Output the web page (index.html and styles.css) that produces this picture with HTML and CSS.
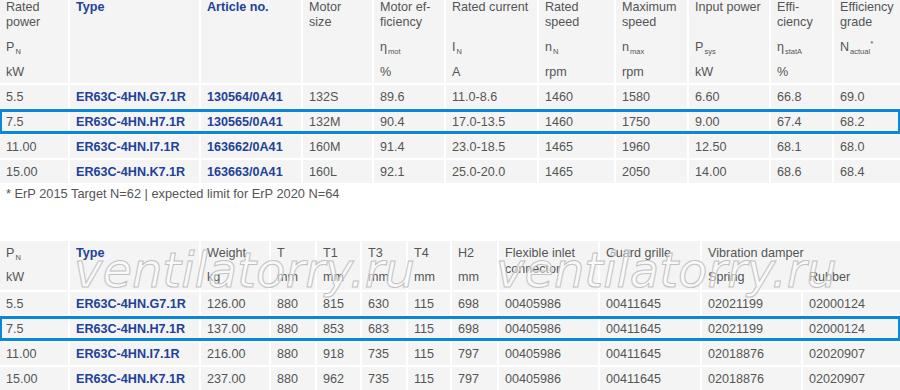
FILE: index.html
```html
<!DOCTYPE html>
<html lang="en">
<head>
<meta charset="utf-8">
<title>ER63C-4HN data</title>
<link rel="stylesheet" href="styles.css">
</head>
<body>
<div class="tbl t1">
  <div class="row head1">
    <div class="c"><div class="nm">Rated<br>power</div><div class="sy">P<span class="s">N</span></div><div class="un">kW</div></div>
    <div class="c b"><div class="nm">Type</div></div>
    <div class="c b"><div class="nm">Article no.</div></div>
    <div class="c"><div class="nm">Motor<br>size</div></div>
    <div class="c"><div class="nm">Motor ef-<br>ficiency</div><div class="sy">η<span class="s">mot</span></div><div class="un">%</div></div>
    <div class="c"><div class="nm">Rated current</div><div class="sy">I<span class="s">N</span></div><div class="un">A</div></div>
    <div class="c"><div class="nm">Rated<br>speed</div><div class="sy">n<span class="s">N</span></div><div class="un">rpm</div></div>
    <div class="c"><div class="nm">Maximum<br>speed</div><div class="sy">n<span class="s">max</span></div><div class="un">rpm</div></div>
    <div class="c"><div class="nm">Input power</div><div class="sy">P<span class="s">sys</span></div><div class="un">kW</div></div>
    <div class="c"><div class="nm">Effi-<br>ciency</div><div class="sy">η<span class="s">statA</span></div><div class="un">%</div></div>
    <div class="c"><div class="nm">Efficiency<br>grade</div><div class="sy">N<span class="s">actual</span><span class="sup">*</span></div></div>
  </div>
  <div class="row">
    <div class="c">5.5</div><div class="c b">ER63C-4HN.G7.1R</div><div class="c b">130564/0A41</div><div class="c">132S</div><div class="c">89.6</div><div class="c">11.0-8.6</div><div class="c">1460</div><div class="c">1580</div><div class="c">6.60</div><div class="c">66.8</div><div class="c">69.0</div>
  </div>
  <div class="row hl">
    <div class="c">7.5</div><div class="c b">ER63C-4HN.H7.1R</div><div class="c b">130565/0A41</div><div class="c">132M</div><div class="c">90.4</div><div class="c">17.0-13.5</div><div class="c">1460</div><div class="c">1750</div><div class="c">9.00</div><div class="c">67.4</div><div class="c">68.2</div>
  </div>
  <div class="row">
    <div class="c">11.00</div><div class="c b">ER63C-4HN.I7.1R</div><div class="c b">163662/0A41</div><div class="c">160M</div><div class="c">91.4</div><div class="c">23.0-18.5</div><div class="c">1465</div><div class="c">1960</div><div class="c">12.50</div><div class="c">68.1</div><div class="c">68.0</div>
  </div>
  <div class="row">
    <div class="c">15.00</div><div class="c b">ER63C-4HN.K7.1R</div><div class="c b">163663/0A41</div><div class="c">160L</div><div class="c">92.1</div><div class="c">25.0-20.0</div><div class="c">1465</div><div class="c">2050</div><div class="c">14.00</div><div class="c">68.6</div><div class="c">68.4</div>
  </div>
</div>
<p class="note">* ErP 2015 Target N=62 | expected limit for ErP 2020 N=64</p>
<div class="tbl t2">
  <div class="row head2">
    <div class="c"><div class="n2">P<span class="s">N</span></div><div class="u2">kW</div></div>
    <div class="c"><div class="n2 b">Type</div></div>
    <div class="c"><div class="n2">Weight</div><div class="u2">kg</div></div>
    <div class="c"><div class="n2">T</div><div class="u2">mm</div></div>
    <div class="c"><div class="n2">T1</div><div class="u2">mm</div></div>
    <div class="c"><div class="n2">T3</div><div class="u2">mm</div></div>
    <div class="c"><div class="n2">T4</div><div class="u2">mm</div></div>
    <div class="c"><div class="n2">H2</div><div class="u2">mm</div></div>
    <div class="c"><div class="n2">Flexible inlet<br>connector</div></div>
    <div class="c"><div class="n2">Guard grille</div></div>
    <div class="c span2"><div class="n2">Vibration damper</div><div class="u2 vd"><span class="vd1">Spring</span><span>Rubber</span></div></div>
  </div>
  <div class="row">
    <div class="c">5.5</div><div class="c b">ER63C-4HN.G7.1R</div><div class="c">126.00</div><div class="c">880</div><div class="c">815</div><div class="c">630</div><div class="c">115</div><div class="c">698</div><div class="c">00405986</div><div class="c">00411645</div><div class="c">02021199</div><div class="c">02000124</div>
  </div>
  <div class="row hl">
    <div class="c">7.5</div><div class="c b">ER63C-4HN.H7.1R</div><div class="c">137.00</div><div class="c">880</div><div class="c">853</div><div class="c">683</div><div class="c">115</div><div class="c">698</div><div class="c">00405986</div><div class="c">00411645</div><div class="c">02021199</div><div class="c">02000124</div>
  </div>
  <div class="row">
    <div class="c">11.00</div><div class="c b">ER63C-4HN.I7.1R</div><div class="c">216.00</div><div class="c">880</div><div class="c">918</div><div class="c">735</div><div class="c">115</div><div class="c">797</div><div class="c">00405986</div><div class="c">00411645</div><div class="c">02018876</div><div class="c">02020907</div>
  </div>
  <div class="row">
    <div class="c">15.00</div><div class="c b">ER63C-4HN.K7.1R</div><div class="c">237.00</div><div class="c">880</div><div class="c">962</div><div class="c">735</div><div class="c">115</div><div class="c">797</div><div class="c">00405986</div><div class="c">00411645</div><div class="c">02018876</div><div class="c">02020907</div>
  </div>
  <div class="wm wm1" aria-hidden="true">ventilatorry.ru</div>
  <div class="wm wm2" aria-hidden="true">ventilatorry.ru</div>
</div>
</body>
</html>
```
FILE: styles.css
```css
body {
  margin: 0;
  background: #fff;
  font-family: "Liberation Sans", Arial, Helvetica, sans-serif;
  font-size: 12.6px;
  color: #555;
}
.tbl {
  display: grid;
  row-gap: 2px;
}
.row {
  display: grid;
  column-gap: 2px;
}
.t1 .row {
  grid-template-columns: 68px 129px 100px 69px 70px 91px 75px 71px 80px 61px 66px;
}
.t2 .row {
  grid-template-columns: 68px 129px 68px 44px 43px 44px 42px 45px 99px 100px 99px 97px;
}
.c {
  background: #f4f4f4;
  padding: 1px 6px 0;
  line-height: 22px;
  white-space: nowrap;
}
.b {
  color: #22419a;
  font-weight: bold;
}
.hl {
  outline: 3px solid #0b87d9;
  outline-offset: -2px;
}
.head1 .c,
.head2 .c {
  padding: 0 6px;
}
.nm {
  line-height: 15px;
  height: 30px;
}
.sy {
  margin-top: 5px;
  line-height: 25px;
}
.un {
  margin-top: 1px;
  line-height: 22px;
}
.s {
  font-size: 7.5px;
  vertical-align: -3px;
  line-height: 0;
  margin-left: 1px;
}
.sup {
  font-size: 8px;
  vertical-align: 5px;
  line-height: 0;
}
.n2 {
  padding-top: 4px;
  height: 20px;
  line-height: 16px;
}
.u2 {
  line-height: 25px;
}
.span2 {
  grid-column: span 2;
}
.vd {
  display: flex;
}
.vd1 {
  width: 101px;
}
.note {
  margin: 2px 0 38px;
  padding-left: 6px;
  line-height: 18px;
  font-size: 12.8px;
}
.t2 {
  position: relative;
}
.wm {
  position: absolute;
  top: 5px;
  font-family: "DejaVu Sans", sans-serif;
  font-style: italic;
  font-size: 48px;
  line-height: 1;
  color: rgba(255, 255, 255, 0.5);
  -webkit-text-stroke: 1px #c2c2c2;
  white-space: nowrap;
  pointer-events: none;
}
.wm1 {
  left: 74px;
}
.wm2 {
  left: 496px;
}
```
